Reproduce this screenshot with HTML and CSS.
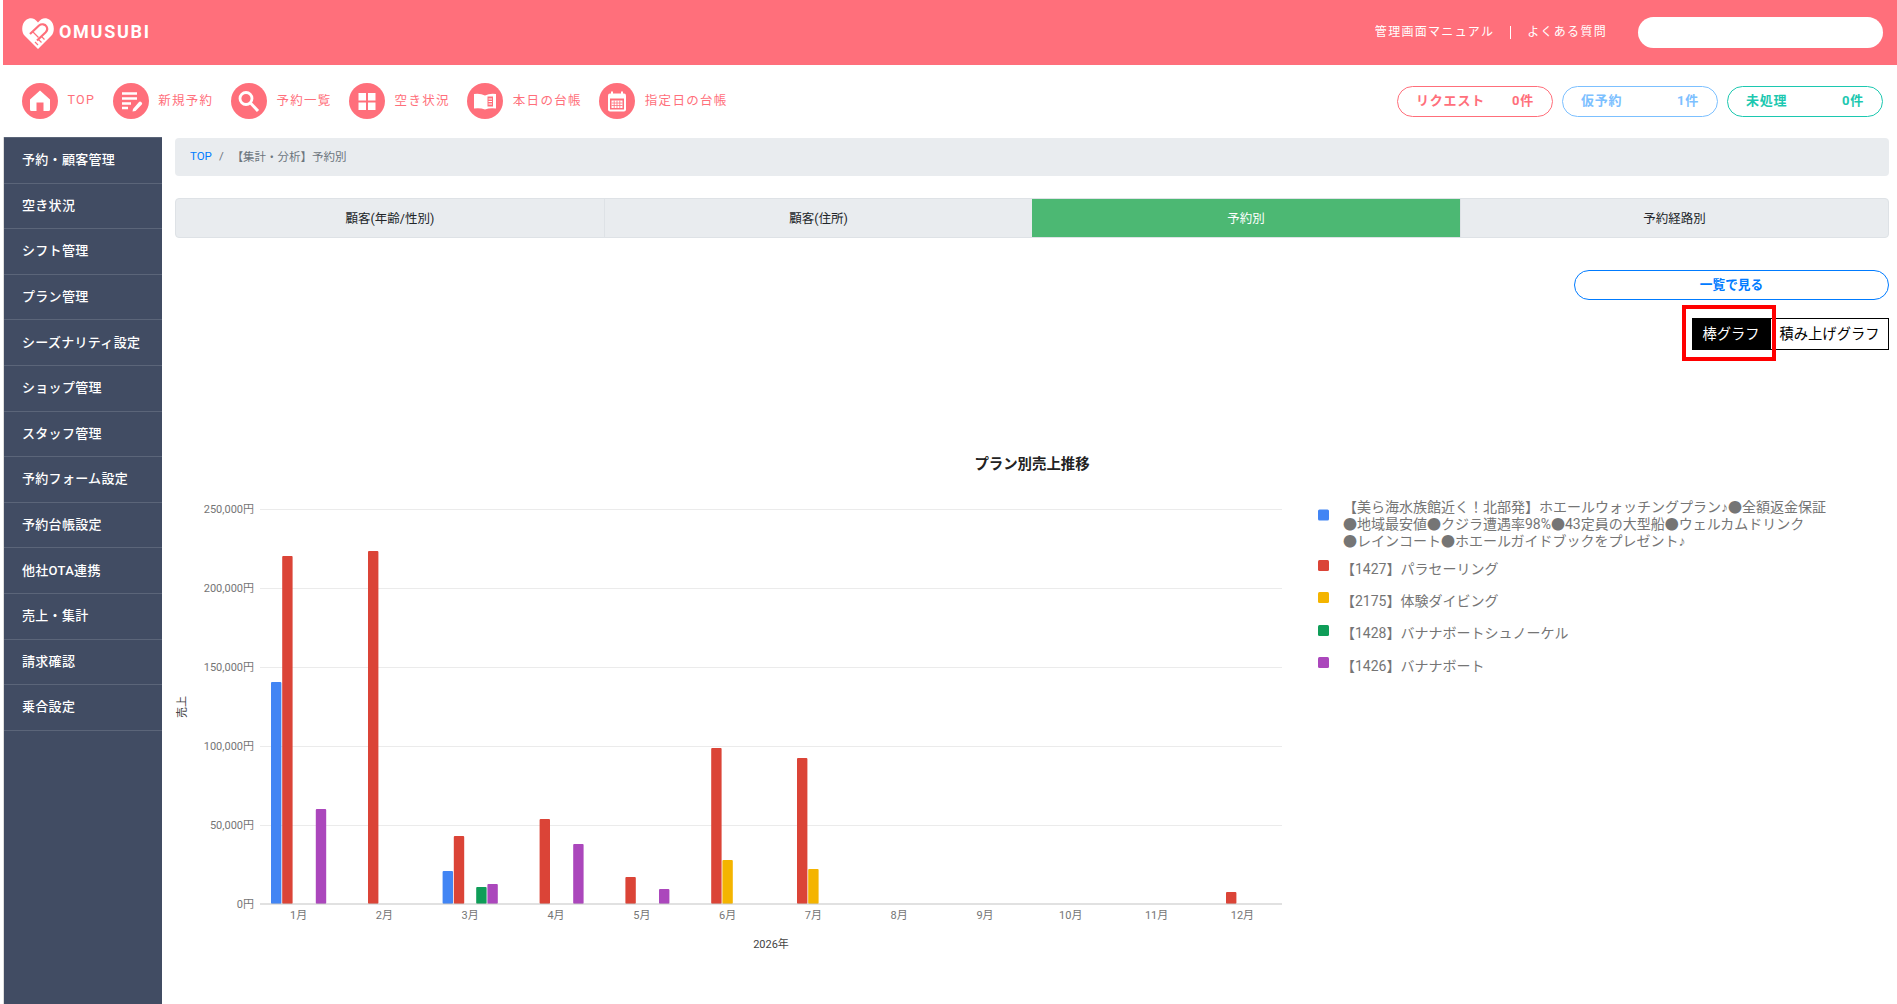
FILE: index.html
```html
<!DOCTYPE html>
<html lang="ja">
<head>
    <meta charset="UTF-8">
    <title>OMUSUBI</title>
    <link rel="stylesheet" href="styles.css">
</head>
<body>
<header class="topbar">
    <a class="logo">
        <svg class="logo-mark" viewBox="0 0 32 32">
            <path d="M16 32 L2.5 18.5 C-1 14.5 -0.5 6.5 4 3 C8 0 12.5 0.5 16 5.5 C19.5 0.5 24 0 28 3 C32.5 6.5 33 14.5 29.5 18.5 Z" fill="#fff"/>
            <path d="M8 17 L17 8.5 C19.5 6.5 23 7 24.5 9.5 C26 12 25 14 23.5 15.5 L15 23.5" fill="none" stroke="#ff6f7b" stroke-width="2.2"/>
            <path d="M11 15 L16.5 20.5 M13 25 L16 28 M16.5 22.5 L19.5 25.5 M19.5 19.5 L22.5 22.5" fill="none" stroke="#ff6f7b" stroke-width="1.2"/>
        </svg>
        <span class="logo-text">OMUSUBI</span>
    </a>
    <div class="topbar-right">
        <a class="top-link">管理画面マニュアル</a>
        <span class="top-sep"></span>
        <a class="top-link">よくある質問</a>
        <div class="top-search"></div>
    </div>
</header>

<nav class="quick-nav">
    <div class="quick-links">
        <a class="quick-item">
            <svg class="quick-icon" viewBox="0 0 36 36"><circle cx="18" cy="18" r="18" fill="#ff6f7b"/><path d="M18 7.5 L28 16.5 V26.5 Q28 28 26.5 28 H21.5 V19.5 H14.5 V28 H9.5 Q8 28 8 26.5 V16.5 Z" fill="#fff"/></svg>
            <span>TOP</span>
        </a>
        <a class="quick-item">
            <svg class="quick-icon" viewBox="0 0 36 36"><circle cx="18" cy="18" r="18" fill="#ff6f7b"/><path d="M9 10.5 H24 M9 15.5 H24 M9 20.5 H18 M9 25 H15" stroke="#fff" stroke-width="2.4" fill="none"/><path d="M20 26 L26 19 Q27 18 28.5 19.2 Q29.8 20.5 28.8 21.5 L22.5 28 L19.5 28.5 Z" fill="#fff"/></svg>
            <span>新規予約</span>
        </a>
        <a class="quick-item">
            <svg class="quick-icon" viewBox="0 0 36 36"><circle cx="18" cy="18" r="18" fill="#ff6f7b"/><circle cx="15" cy="15.5" r="6" fill="none" stroke="#fff" stroke-width="2.8"/><path d="M19.5 20 L27 28" stroke="#fff" stroke-width="3" fill="none"/></svg>
            <span>予約一覧</span>
        </a>
        <a class="quick-item">
            <svg class="quick-icon" viewBox="0 0 36 36"><circle cx="18" cy="18" r="18" fill="#ff6f7b"/><path d="M9.5 10 H17 V17.5 H9.5 Z M19 10 H26.5 V17.5 H19 Z M9.5 19.5 H17 V27 H9.5 Z M19 19.5 H26.5 V27 H19 Z" fill="#fff"/></svg>
            <span>空き状況</span>
        </a>
        <a class="quick-item">
            <svg class="quick-icon" viewBox="0 0 36 36"><circle cx="18" cy="18" r="18" fill="#ff6f7b"/><path d="M7 11 Q13 10 18 12.5 V26.5 Q13 24.5 7 25.5 Z" fill="#fff"/><path d="M18 12.5 Q23 10 29 11 V25.5 Q23 24.5 18 26.5 Z" fill="#fff"/><path d="M20.5 13.5 H26 V23.5 H20.5 Z" fill="#ff6f7b"/><path d="M21.5 16 H25 M21.5 18.5 H25 M21.5 21 H25" stroke="#fff" stroke-width="1.1"/></svg>
            <span>本日の台帳</span>
        </a>
        <a class="quick-item">
            <svg class="quick-icon" viewBox="0 0 36 36"><circle cx="18" cy="18" r="18" fill="#ff6f7b"/><rect x="9" y="10.5" width="18" height="18" rx="2" fill="#fff"/><path d="M13 8.5 V12 M23 8.5 V12" stroke="#fff" stroke-width="2"/><path d="M11 15.5 H25 V26.5 H11 Z" fill="#ff6f7b"/><path d="M12.5 17.5 H23.5 V25 H12.5 Z" fill="#fff"/><path d="M12.5 20 H23.5 M12.5 22.5 H23.5 M15.2 17.5 V25 M18 17.5 V25 M20.8 17.5 V25" stroke="#ff6f7b" stroke-width="0.8"/></svg>
            <span>指定日の台帳</span>
        </a>
    </div>
    <div class="status-pills">
        <a class="status-pill status-request"><span>リクエスト</span><span>0件</span></a>
        <a class="status-pill status-temp"><span>仮予約</span><span>1件</span></a>
        <a class="status-pill status-open"><span>未処理</span><span>0件</span></a>
    </div>
</nav>

<div class="layout">
    <aside class="sidebar">
        <a class="side-item">予約・顧客管理</a>
        <a class="side-item">空き状況</a>
        <a class="side-item">シフト管理</a>
        <a class="side-item">プラン管理</a>
        <a class="side-item">シーズナリティ設定</a>
        <a class="side-item">ショップ管理</a>
        <a class="side-item">スタッフ管理</a>
        <a class="side-item">予約フォーム設定</a>
        <a class="side-item">予約台帳設定</a>
        <a class="side-item">他社OTA連携</a>
        <a class="side-item">売上・集計</a>
        <a class="side-item">請求確認</a>
        <a class="side-item">乗合設定</a>
    </aside>

    <main class="content">
        <div class="breadcrumb">
            <a class="crumb-link">TOP</a>
            <span class="crumb-sep">/</span>
            <span class="crumb-current">【集計・分析】予約別</span>
        </div>

        <div class="tabs">
            <a class="tab">顧客(年齢/性別)</a>
            <a class="tab">顧客(住所)</a>
            <a class="tab active">予約別</a>
            <a class="tab">予約経路別</a>
        </div>

        <a class="list-btn">一覧で見る</a>

        <div class="graph-toggle">
            <button class="toggle-btn selected">棒グラフ</button>
            <button class="toggle-btn">積み上げグラフ</button>
            <span class="highlight-box"></span>
        </div>

        <div class="chart">
            <svg class="chart-svg" viewBox="175 440 1714 564">
                <text class="chart-title" x="1032" y="469" text-anchor="middle">プラン別売上推移</text>

                <g class="grid">
                    <rect x="260" y="509" width="1022" height="1"/>
                    <rect x="260" y="588" width="1022" height="1"/>
                    <rect x="260" y="667" width="1022" height="1"/>
                    <rect x="260" y="746" width="1022" height="1"/>
                    <rect x="260" y="825" width="1022" height="1"/>
                </g>

                <g class="axis-label" text-anchor="end">
                    <text x="254" y="513">250,000円</text>
                    <text x="254" y="592">200,000円</text>
                    <text x="254" y="671">150,000円</text>
                    <text x="254" y="750">100,000円</text>
                    <text x="254" y="829">50,000円</text>
                    <text x="254" y="908">0円</text>
                </g>
                <text class="axis-title" transform="translate(186 707) rotate(-90)" text-anchor="middle">売上</text>

                <g fill="#4285f4">
                    <rect x="271" y="682" width="10.4" height="222" rx="1"/>
                    <rect x="442.6" y="871" width="10.4" height="33" rx="1"/>
                </g>
                <g fill="#db4437">
                    <rect x="282.2" y="556" width="10.4" height="348" rx="1"/>
                    <rect x="368" y="551" width="10.4" height="353" rx="1"/>
                    <rect x="453.8" y="836" width="10.4" height="68" rx="1"/>
                    <rect x="539.6" y="819" width="10.4" height="85" rx="1"/>
                    <rect x="625.4" y="877" width="10.4" height="27" rx="1"/>
                    <rect x="711.2" y="748" width="10.4" height="156" rx="1"/>
                    <rect x="797" y="758" width="10.4" height="146" rx="1"/>
                    <rect x="1226" y="892" width="10.4" height="12" rx="1"/>
                </g>
                <g fill="#f4b400">
                    <rect x="722.4" y="860" width="10.4" height="44" rx="1"/>
                    <rect x="808.2" y="869" width="10.4" height="35" rx="1"/>
                </g>
                <g fill="#0f9d58">
                    <rect x="476.2" y="887" width="10.4" height="17" rx="1"/>
                </g>
                <g fill="#ab47bc">
                    <rect x="315.8" y="809" width="10.4" height="95" rx="1"/>
                    <rect x="487.4" y="884" width="10.4" height="20" rx="1"/>
                    <rect x="573.2" y="844" width="10.4" height="60" rx="1"/>
                    <rect x="659" y="889" width="10.4" height="15" rx="1"/>
                </g>
                <rect class="baseline" x="260" y="903.5" width="1022" height="1"/>

                <g class="axis-label" text-anchor="middle">
                    <text x="298.6" y="919">1月</text>
                    <text x="384.4" y="919">2月</text>
                    <text x="470.2" y="919">3月</text>
                    <text x="556" y="919">4月</text>
                    <text x="641.8" y="919">5月</text>
                    <text x="727.6" y="919">6月</text>
                    <text x="813.4" y="919">7月</text>
                    <text x="899.2" y="919">8月</text>
                    <text x="985" y="919">9月</text>
                    <text x="1070.8" y="919">10月</text>
                    <text x="1156.6" y="919">11月</text>
                    <text x="1242.4" y="919">12月</text>
                </g>
                <text class="axis-title" x="771" y="948" text-anchor="middle">2026年</text>

                <rect x="1318" y="509.5" width="11" height="11" rx="1.5" fill="#4285f4"/>
                <rect x="1318" y="560" width="11" height="11" rx="1.5" fill="#db4437"/>
                <rect x="1318" y="592" width="11" height="11" rx="1.5" fill="#f4b400"/>
                <rect x="1318" y="625" width="11" height="11" rx="1.5" fill="#0f9d58"/>
                <rect x="1318" y="657" width="11" height="11" rx="1.5" fill="#ab47bc"/>
                <g class="legend-label">
                    <text x="1343" y="511.5">【美ら海水族館近く！北部発】ホエールウォッチングプラン<tspan class="note">♪</tspan>●全額返金保証</text>
                    <text x="1343" y="528.5">●地域最安値●クジラ遭遇率98%●43定員の大型船●ウェルカムドリンク</text>
                    <text x="1343" y="545.5">●レインコート●ホエールガイドブックをプレゼント<tspan class="note">♪</tspan></text>
                    <text x="1341" y="574">【1427】パラセーリング</text>
                    <text x="1341" y="606">【2175】体験ダイビング</text>
                    <text x="1341" y="638">【1428】バナナボートシュノーケル</text>
                    <text x="1341" y="671">【1426】バナナボート</text>
                </g>
            </svg>
        </div>
    </main>
</div>
</body>
</html>
```

FILE: styles.css
```css
* {
    box-sizing: border-box;
}

html, body {
    height: 100%;
}

body {
    margin: 0;
    padding-left: 3px;
    height: 100vh;
    overflow: hidden;
    display: flex;
    flex-direction: column;
    background-color: #fff;
    color: #212529;
    font-family: Roboto, "Noto Sans CJK JP", sans-serif;
}

/* top bar */
.topbar {
    flex: none;
    height: 65px;
    display: flex;
    justify-content: space-between;
    align-items: center;
    padding: 0 14px 0 19px;
    background-color: #ff6f7b;
}

.logo {
    display: flex;
    align-items: center;
    gap: 5px;
}

.logo-mark {
    width: 32px;
    height: 32px;
}

.logo-text {
    padding-bottom: 2px;
    color: #fff;
    font-size: 18px;
    font-weight: 700;
    letter-spacing: 1.7px;
}

.topbar-right {
    display: flex;
    align-items: center;
}

.top-link {
    padding-bottom: 4px;
    color: #fff;
    font-size: 12px;
    letter-spacing: 1.3px;
}

.top-sep {
    width: 1px;
    height: 13px;
    margin: 0 16px;
    background-color: #fff;
}

.top-search {
    width: 245px;
    height: 31px;
    margin-left: 31px;
    border-radius: 16px;
    background-color: #fff;
}

/* icon row */
.quick-nav {
    flex: none;
    height: 72px;
    display: flex;
    justify-content: space-between;
    align-items: center;
    padding: 0 14px 0 19px;
}

.quick-links {
    display: flex;
    gap: 17.5px;
}

.quick-item {
    display: flex;
    align-items: center;
    gap: 9.5px;
    color: #ff6f7b;
    font-size: 12.5px;
    letter-spacing: 1.3px;
}

.quick-item span {
    padding-bottom: 3px;
}

.quick-icon {
    width: 36px;
    height: 36px;
}

.status-pills {
    display: flex;
    gap: 9px;
}

.status-pill {
    width: 156px;
    height: 31px;
    display: flex;
    justify-content: space-between;
    align-items: center;
    padding: 0 18px 3px;
    border: 1px solid;
    border-radius: 16px;
    font-size: 13px;
    font-weight: 700;
    letter-spacing: 0.8px;
}

.status-request {
    color: #ff6f7b;
    border-color: #ff6f7b;
}

.status-temp {
    color: #7cc0ff;
    border-color: #7cc0ff;
}

.status-open {
    color: #1cc8b0;
    border-color: #1cc8b0;
}

/* main area */
.layout {
    flex: 1;
    display: flex;
    min-height: 0;
}

.sidebar {
    flex: none;
    width: 158px;
    margin-left: 1px;
    box-shadow: -1px 0 0 #ddd;
    border-top: 1px solid #5b6579;
    background-color: #414c63;
}

.side-item {
    display: flex;
    align-items: center;
    height: 45.6px;
    padding: 0 0 3px 18px;
    border-bottom: 1px solid #5b6579;
    color: #fff;
    font-size: 13px;
    font-weight: 500;
    letter-spacing: 0.3px;
}

.content {
    flex: 1;
    min-width: 0;
    display: flex;
    flex-direction: column;
    padding: 1px 8px 0 13px;
}

.breadcrumb {
    flex: none;
    height: 38px;
    display: flex;
    align-items: center;
    padding: 0 0 2px 15px;
    border-radius: 4px;
    background-color: #e9ecef;
    font-size: 11.5px;
}

.crumb-link {
    color: #007bff;
}

.crumb-sep {
    margin: 0 8px 0 7px;
    color: #6c757d;
}

.crumb-current {
    color: #6c757d;
}

.tabs {
    flex: none;
    height: 40px;
    margin-top: 22px;
    display: grid;
    grid-template-columns: repeat(4, 1fr);
    border: 1px solid #dee2e6;
    border-radius: 4px;
    background-color: #e9ecef;
    overflow: hidden;
}

.tab {
    display: flex;
    justify-content: center;
    align-items: center;
    padding-bottom: 2px;
    border-left: 1px solid #dee2e6;
    color: #212529;
    font-size: 12.5px;
}

.tab:first-child {
    border-left: none;
}

.tab.active {
    border-left: none;
    background-color: #4cb873;
    color: #fff;
}

.list-btn {
    flex: none;
    align-self: flex-end;
    width: 315px;
    height: 30px;
    margin-top: 32px;
    display: flex;
    justify-content: center;
    align-items: center;
    padding-bottom: 3px;
    border: 1.5px solid #007bff;
    border-radius: 15px;
    color: #007bff;
    font-size: 12.7px;
    font-weight: 700;
}

.graph-toggle {
    flex: none;
    position: relative;
    align-self: flex-end;
    margin-top: 18px;
    display: flex;
}

.toggle-btn {
    width: 78px;
    height: 32px;
    padding: 0 0 3px;
    border: 1px solid #000;
    background-color: #fff;
    color: #000;
    font-family: inherit;
    font-size: 14.3px;
}

.toggle-btn + .toggle-btn {
    width: 119px;
}

.toggle-btn.selected {
    background-color: #000;
    color: #fff;
}

.highlight-box {
    position: absolute;
    left: -10px;
    top: -13px;
    width: 94px;
    height: 56px;
    border: 4px solid #f00;
}

.chart {
    flex: none;
    height: 564px;
    margin-top: 90px;
}

.chart-svg {
    display: block;
    width: 100%;
    height: 100%;
}

.chart-title {
    fill: #222;
    font-size: 14.4px;
    font-weight: 700;
}

.grid rect {
    fill: #ebebeb;
}

.baseline {
    fill: #c4c4c4;
}

.axis-label {
    fill: #757575;
    font-size: 11px;
}

.axis-title {
    fill: #444;
    font-size: 11px;
}

.legend-label {
    fill: #757575;
    font-size: 14px;
}

.note {
    font-family: "Liberation Sans", sans-serif;
}
```
